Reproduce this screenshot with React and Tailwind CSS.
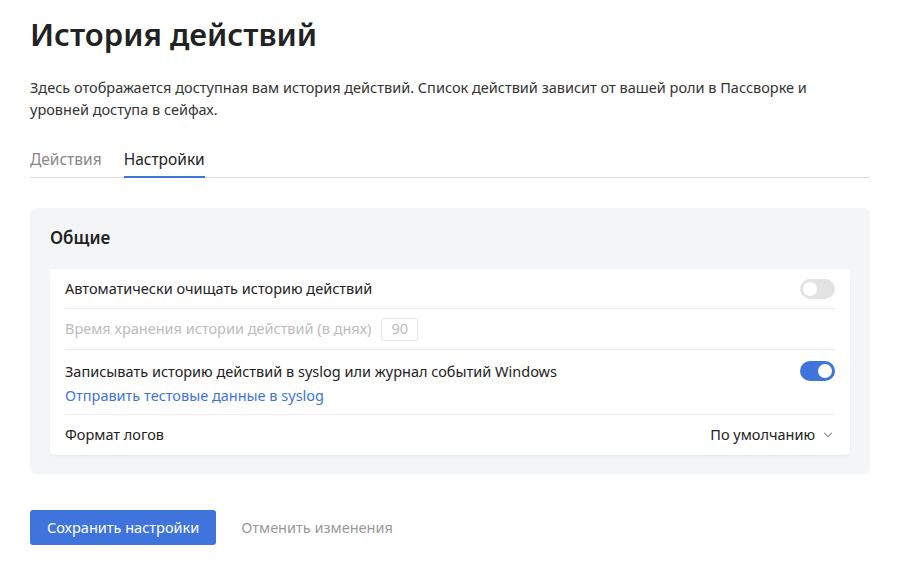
import { ChevronDown } from 'lucide-react'

function Toggle({ on }) {
  return (
    <div className={`w-[35px] h-[20px] rounded-full flex items-center px-[3px] ${on ? 'bg-[#3f74dc] justify-end' : 'bg-[#e3e3e3] justify-start'}`}>
      <div className="w-[14px] h-[14px] rounded-full bg-white" />
    </div>
  )
}

export default function App() {
  return (
    <div className="w-[900px] h-[573px] bg-white px-[30px] pt-[14px] text-[#222] font-['Noto_Sans',sans-serif]">
      <h1 className="text-[31px] leading-[40px] font-semibold">История действий</h1>
      <p className="mt-[22px] text-[14.5px] leading-[22px] text-[#333] w-[800px]">
        Здесь отображается доступная вам история действий. Список действий зависит от вашей роли в Пассворке и уровней доступа в сейфах.
      </p>
      <div className="mt-[28px] flex gap-[22px] border-b border-[#dcdcdc] w-[840px] text-[15.5px]">
        <div className="pb-[6px] text-[#888]">Действия</div>
        <div className="pb-[5px] border-b-2 border-[#3f74dc] -mb-px">Настройки</div>
      </div>
      <div className="mt-[30px] w-[840px] bg-[#f4f5f7] rounded-[6px] px-[20px] pt-[18px] pb-[19px]">
        <div className="text-[17px] font-semibold leading-[24px]">Общие</div>
        <div className="mt-[19px] bg-white rounded-[4px] shadow-[0_1px_2px_rgba(0,0,0,0.06)] px-[15px] text-[14.5px]">
          <div className="h-[40px] flex items-center justify-between border-b border-[#ececec]">
            <span>Автоматически очищать историю действий</span>
            <Toggle on={false} />
          </div>
          <div className="h-[41px] flex items-center gap-[10px] border-b border-[#ececec] text-[#bcbcbc]">
            <span>Время хранения истории действий (в днях)</span>
            <span className="border border-[#e6e6e6] rounded-[3px] px-[9px] h-[23px] flex items-center">90</span>
          </div>
          <div className="h-[65px] flex justify-between border-b border-[#ececec] pt-[9px]">
            <div className="leading-[24px]">
              <div>Записывать историю действий в syslog или журнал событий Windows</div>
              <div className="text-[#3f74dc]">Отправить тестовые данные в syslog</div>
            </div>
            <div className="pt-[2px]"><Toggle on /></div>
          </div>
          <div className="h-[40px] flex items-center justify-between">
            <span>Формат логов</span>
            <span className="flex items-center gap-[6px]">По умолчанию <ChevronDown size={14} className="text-[#999]" /></span>
          </div>
        </div>
      </div>
      <div className="mt-[36px] flex items-center gap-[25px] text-[14.5px]">
        <button className="h-[35px] px-[17px] bg-[#3f74dc] text-white rounded-[3px]">Сохранить настройки</button>
        <span className="text-[#999]">Отменить изменения</span>
      </div>
    </div>
  )
}
